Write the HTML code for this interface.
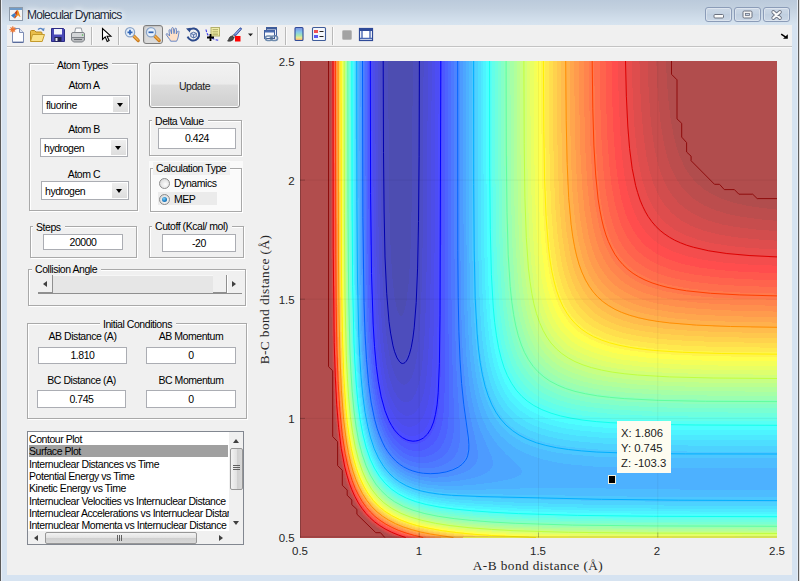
<!DOCTYPE html>
<html><head><meta charset="utf-8"><title>Molecular Dynamics</title>
<style>
html,body{margin:0;padding:0}
body{width:800px;height:581px;overflow:hidden;position:relative;background:#d6e3f1;font-family:"Liberation Sans",sans-serif;font-size:10.5px;letter-spacing:-0.45px;color:#000}
div,span{position:absolute;box-sizing:border-box}
.t{white-space:nowrap;line-height:13px;height:13px}
.c{text-align:center}
#title{left:0;top:0;width:800px;height:25px;background:linear-gradient(#bbcadb,#c3d1e0 35%,#cfdce9 70%,#d7e4f0)}
#client{left:7px;top:25px;width:785px;height:550px;background:#f0f0f0}
.panel{border:1px solid #a9a9a9;box-shadow:1px 1px 0 #fff,inset 1px 1px 0 #fff}
.pt{background:#f0f0f0;padding:0 4px 0 3px;line-height:13px;height:13px;white-space:nowrap}
.edit{background:#fff;border:1px solid #abadb3;text-align:center;line-height:15px;white-space:nowrap}
.combo{background:#fff;border:1px solid #abadb3;line-height:18px;padding-left:3px;white-space:nowrap}
.combo i{position:absolute;right:1px;top:1px;bottom:1px;width:15px;background:linear-gradient(#efefef,#dddddd)}
.combo i:after{content:"";position:absolute;left:4px;top:6px;border:3.5px solid transparent;border-top:4px solid #000;border-bottom:0}
.li{left:1px;white-space:nowrap;line-height:12px;height:12px}
.radio{width:11px;height:11px;border-radius:50%;border:1px solid #8c8c8c;background:radial-gradient(circle at 60% 60%,#fdfdfd 0,#e4e4e4 55%,#cfcfcf 100%)}
.radio.on:after{content:"";position:absolute;left:2px;top:2px;width:5px;height:5px;border-radius:50%;background:radial-gradient(circle at 40% 35%,#7fd0f5 0,#1f7fc4 55%,#0c4f8c 100%)}
.sep{top:27px;width:1px;height:18px;background:#b9b9b9;box-shadow:1px 0 0 #fbfbfb}
.wb{top:7px;width:27px;height:15px;border:1px solid #8b9cb8;border-radius:3px;background:linear-gradient(#ccd8e6,#c4d2e2 45%,#c0cfe0 50%,#cad7e6);box-shadow:inset 0 0 0 1px rgba(255,255,255,.35)}
.wb svg{position:absolute;left:-1px;top:-1px}
.tick{letter-spacing:0;font-size:11.5px;line-height:12px;height:12px;color:#262626;white-space:nowrap}
.ax{letter-spacing:0.42px;font-family:"Liberation Serif",serif;font-size:13.3px;color:#262626;white-space:nowrap;line-height:15px}
</style></head><body>
<div id="title"></div>
<div style="left:0;top:0;width:1px;height:581px;background:#5a5a5a"></div>
<div style="left:1px;top:0;width:1px;height:581px;background:#e8eef6"></div>
<div style="left:797px;top:0;width:1px;height:581px;background:#e4ecf6"></div>
<div style="left:798px;top:0;width:1px;height:581px;background:#5f5f5f"></div>
<div style="left:799px;top:0;width:1px;height:581px;background:#e0e0e0"></div>
<div id="client"></div>
<!-- title bar -->
<svg style="position:absolute;left:9px;top:7px" width="14" height="14" viewBox="0 0 14 14">
<rect x="0.5" y="0.5" width="13" height="13" fill="#f4f4f4" stroke="#8c99a8"/>
<rect x="1" y="1" width="12" height="2" fill="#6f9bc8"/>
<path d="M2 8.5 L5.5 6 L7 7.5 L5 11 Z" fill="#3d7fc4"/>
<path d="M5.5 6 L8 3 L9 5 L7.5 9.5 L6 11.5 L5 11 L7 7.5Z" fill="#c0401c"/>
<path d="M8 3 L9.2 3.5 L11.5 10 L10.3 9.5 L9.2 8.2 L7.5 9.5 L6 11.5 L8.2 6Z" fill="#f08a1c"/>
</svg>
<div class="t" style="left:27px;top:8px;font-size:12px;line-height:15px;height:15px;letter-spacing:-0.75px;color:#222a3a;text-shadow:0 0 4px #fff,0 0 7px #fff,0 0 9px #eef3fa">Molecular Dynamics</div>
<div class="wb" style="left:705px"><svg width="27" height="15" viewBox="0 0 27 15"><rect x="9" y="7.5" width="9.5" height="3.5" rx="1" fill="#fbfbfb" stroke="#6b7280" stroke-width="1"/></svg></div>
<div class="wb" style="left:734px"><svg width="27" height="15" viewBox="0 0 27 15"><rect x="9" y="4" width="9" height="7" rx="1.2" fill="#f4f4f4" stroke="#6b7280" stroke-width="1"/><rect x="11.5" y="6.5" width="4" height="2" fill="#c4d3e6" stroke="#6b7280" stroke-width="0.8"/></svg></div>
<div class="wb" style="left:763px"><svg width="27" height="15" viewBox="0 0 27 15"><path d="M10.3 5 L16.900 11 M16.900 5 L10.300 11" stroke="#6b7280" stroke-width="3.800" stroke-linecap="round"/><path d="M10.300 5 L16.900 11 M16.900 5 L10.300 11" stroke="#fbfbfb" stroke-width="2.100" stroke-linecap="round"/></svg></div>

<!-- toolbar -->
<div style="left:7px;top:46px;width:785px;height:1px;background:#c3c3c3"></div>
<div style="left:7px;top:47px;width:785px;height:1px;background:#fafafa"></div>
<div class="sep" style="left:91px"></div><div class="sep" style="left:118px"></div><div class="sep" style="left:257px"></div><div class="sep" style="left:285px"></div><div class="sep" style="left:332px"></div>
<div style="left:143px;top:25px;width:20px;height:19px;border:1px solid #7d7d7d;border-radius:3px;background:#dadada;box-shadow:inset 1px 1px 1px #c4c4c4"></div>
<svg style="position:absolute;left:8px;top:25px" width="380" height="20" viewBox="0 0 380 20">
<!-- new -->
<g transform="translate(2,1)"><path d="M2.5 2.5h7l4 4v9.5h-11z" fill="#fdfdff" stroke="#7d8db5"/><path d="M9.5 2.5v4h4" fill="#dfe6f5" stroke="#7d8db5"/><path d="M13.5 16.5h-11" stroke="#5a6c9c"/><circle cx="2.8" cy="3.6" r="2.4" fill="#f08a3c"/><circle cx="2.8" cy="3.6" r="1.1" fill="#ffd27a"/><path d="M2.8 0v7.2M-.8 3.6h7.2M.3 1.1l5 5M5.3 1.1l-5 5" stroke="#e8642c" stroke-width=".7"/></g>
<!-- open -->
<g transform="translate(21,1)"><path d="M1.5 15V5.5q0-1 1-1h3l1.5 1.5h5q1 0 1 1V15z" fill="#e9bd4b" stroke="#b8891f"/><path d="M1.5 15.5l2-7h12l-2.3 7z" fill="#fbe28a" stroke="#c49a2c"/><path d="M9 3.6q3-2.6 5.2.2" fill="none" stroke="#5b86c4" stroke-width="1.3"/><path d="M15.6 1.8l-.6 3.4-2.8-1.4z" fill="#5b86c4"/></g>
<!-- save -->
<g transform="translate(42,1)"><path d="M1.5 2.5h12l1 1v12h-13z" fill="#4a4ab8" stroke="#2c2c86"/><rect x="4" y="3" width="8" height="5.5" fill="#f1f3fb"/><rect x="4.5" y="11" width="7" height="4.5" fill="#23234f"/><rect x="5.5" y="12" width="2" height="3" fill="#e8e8f4"/></g>
<!-- print -->
<g transform="translate(62,1)"><path d="M4.5 7l1.2-5h5.5l1.3 5z" fill="#fbfbfb" stroke="#9aa0a8"/><path d="M1.5 8q0-1.5 1.5-1.5h10q1.5 0 1.5 1.5v4.5h-13z" fill="#d4d6d8" stroke="#7f8388"/><path d="M1.5 11.5h13v2.5l-2 2h-9l-2-2z" fill="#b9bbbe" stroke="#7f8388"/><path d="M4 13.5h8" stroke="#6a6e73"/><circle cx="12.6" cy="9" r=".8" fill="#49b04a"/></g>
<!-- pointer -->
<g transform="translate(92,1)"><path d="M2.5 2.5v11l2.7-2.6 2 4.6 1.9-.9-2-4.4h3.8z" fill="#fff" stroke="#000" stroke-width="1.1" stroke-linejoin="miter"/></g>
<!-- zoom in -->
<g transform="translate(116,1)"><path d="M9.2 9.5l5 5" stroke="#c87a1e" stroke-width="3.2" stroke-linecap="round"/><path d="M9.6 9.7l4.4 4.4" stroke="#f3b04c" stroke-width="1.4" stroke-linecap="round"/><circle cx="6" cy="6.3" r="4.6" fill="#e6f0fb" stroke="#8aa4c8" stroke-width="1.3"/><path d="M3.5 6.3h5M6 3.8v5" stroke="#2f62b4" stroke-width="1.7"/></g>
<!-- zoom out -->
<g transform="translate(137,1)"><path d="M9.2 9.5l5 5" stroke="#c87a1e" stroke-width="3.2" stroke-linecap="round"/><path d="M9.6 9.7l4.4 4.4" stroke="#f3b04c" stroke-width="1.4" stroke-linecap="round"/><circle cx="6" cy="6.3" r="4.6" fill="#e6f0fb" stroke="#8aa4c8" stroke-width="1.3"/><path d="M3.5 6.3h5" stroke="#2f62b4" stroke-width="1.7"/></g>
<!-- hand -->
<g transform="translate(157,1)"><path d="M1 8.300Q1.800 7 3 8.200L4.600 10 4 4.800Q4 3.600 4.800 3.600T5.800 4.600L6.500 7.800 6.700 2.600Q6.800 1.600 7.600 1.600T8.500 2.600L9 7.600 9.800 3Q10 2.100 10.800 2.200T11.500 3.300L11.300 8 12.400 5.600Q12.900 4.800 13.600 5.100T14 6.300L13.200 11Q12.800 13 11.600 15.200H5.600Q4.800 13.200 3.600 12Z" fill="#fde0c8" stroke="#5b7fc4" stroke-width=".9" stroke-linejoin="round"/></g>
<!-- rotate -->
<g transform="translate(177,1)"><path d="M4.400 3.900A6 6 0 1 1 2.600 10.600" fill="none" stroke="#2c4a8c" stroke-width="2"/><path d="M1 2.600l4.800-.8-.9 4.600z" fill="#2c4a8c"/><path d="M5.800 7.400l2.800-1.200 2.800 1.200v3.200l-2.800 1.300-2.800-1.300z" fill="#dfe6f4" stroke="#46639e" stroke-width=".9"/><path d="M5.800 7.400l2.800 1.300 2.800-1.300M8.600 8.700v3.200" fill="none" stroke="#46639e" stroke-width=".9"/></g>
<!-- data cursor -->
<g transform="translate(197,1)"><path d="M1 3.500Q2 9.500 5.500 11.500T14 14.500" fill="none" stroke="#3a3ae8" stroke-width="1.100" stroke-dasharray="2.500 1.300"/><rect x="6" y="1.500" width="8.500" height="8.500" fill="#f1eea8" stroke="#b4b06a"/><path d="M7.500 3.500h5.500M7.500 5.300h5.500M7.500 7.100h5.500M7.500 8.600h5.500" stroke="#a09c58" stroke-width=".7"/><path d="M2 11.500h7M5.500 8v7" stroke="#000" stroke-width="1.800"/></g>
<!-- brush -->
<g transform="translate(218,1)"><path d="M7.500 9L13.800 2.200q.9-.7 1.500 0t-.1 1.400L9 10.400z" fill="#5a78c8" stroke="#2f4a98" stroke-width=".8"/><path d="M7.300 8.800l1.900 1.900-1.100 1.200-2-1.900z" fill="#c9c9c9" stroke="#666" stroke-width=".7"/><path d="M6 10q-2.500.5-3 2.500t-1.500 2.500q3.500.8 5.500-1.200 1.200-1.500.300-2.900z" fill="#4d4d4d" stroke="#2a2a2a" stroke-width=".7"/><path d="M9.300 8.300L14.300 3" stroke="#b9c8f0" stroke-width=".9"/><rect x="9" y="10" width="5.500" height="5.500" fill="#f00"/></g>
<path d="M240 8.500h5l-2.500 2.800z" fill="#222"/>
<!-- link -->
<g transform="translate(255,1)"><rect x="3.500" y="1.500" width="10" height="8" fill="#eef2fa" stroke="#3e5c9a"/><rect x="3.500" y="1.500" width="10" height="2" fill="#3e5c9a"/><rect x="1.500" y="4.500" width="10" height="8" fill="#f6f8fc" stroke="#3e5c9a"/><rect x="1.500" y="4.500" width="10" height="2" fill="#4a6cb0"/><rect x="2.500" y="10" width="6.500" height="4.500" rx="2.200" fill="none" stroke="#6f8cae" stroke-width="1.700"/><rect x="8" y="10" width="6.500" height="4.500" rx="2.200" fill="none" stroke="#6f8cae" stroke-width="1.700"/><path d="M6.500 12.300h4" stroke="#4d6a90" stroke-width="1.500"/></g>
<!-- colorbar -->
<defs><linearGradient id="cbg" x1="0" y1="0" x2="0" y2="1"><stop offset="0" stop-color="#7a8ce0"/><stop offset=".35" stop-color="#86c8ec"/><stop offset=".6" stop-color="#a4e6b4"/><stop offset=".8" stop-color="#f2e88c"/><stop offset="1" stop-color="#f0a070"/></linearGradient></defs>
<rect x="287" y="2.500" width="8" height="13" rx="1" fill="url(#cbg)" stroke="#2f4a98" stroke-width="1.100"/>
<!-- legend -->
<g transform="translate(303,1)"><rect x="1.500" y="1.500" width="13" height="13" rx="1" fill="#f4f6fb" stroke="#3e5c9a" stroke-width="1.100"/><rect x="3" y="4" width="4" height="3" fill="#f05050"/><rect x="3" y="9" width="4" height="3" fill="#5a5af0"/><path d="M8.500 5.500h4M8.500 10.500h4" stroke="#222" stroke-width="1.200"/></g>
<!-- gray square -->
<rect x="334.500" y="5.500" width="9" height="9" rx="1" fill="#a3a3a3" stroke="#b9b9b9"/>
<!-- dock -->
<g transform="translate(350,1)"><rect x="1.500" y="2.500" width="13" height="12" fill="#fff" stroke="#2f4a98" stroke-width="1.200"/><rect x="1.500" y="2.500" width="13" height="2.500" fill="#2f4a98"/><path d="M4 5v7.500M12 5v7.500M2 12.500h12" stroke="#4a68b4" stroke-width="1.400"/></g>
</svg>
<!-- toolbar overflow arrow -->
<svg style="position:absolute;left:780px;top:33px" width="9" height="7" viewBox="0 0 9 7"><path d="M1.200 1.200l4.500 3" stroke="#000" stroke-width="1.500"/><path d="M7.800 1.200v4.600h-4.800z" fill="#000"/></svg>

<!-- Atom Types panel -->
<div class="panel" style="left:29px;top:63px;width:109px;height:148px"></div>
<div class="pt" style="left:54px;top:59px">Atom Types</div>
<div class="t c" style="left:42px;top:79px;width:84px">Atom A</div>
<div class="combo" style="left:42px;top:95px;width:88px;height:19px">fluorine<i></i></div>
<div class="t c" style="left:42px;top:123px;width:84px">Atom B</div>
<div class="combo" style="left:40px;top:138px;width:88px;height:19px">hydrogen<i></i></div>
<div class="t c" style="left:42px;top:168px;width:84px">Atom C</div>
<div class="combo" style="left:41px;top:181px;width:88px;height:19px">hydrogen<i></i></div>
<!-- Update button -->
<div style="left:149px;top:62px;width:91px;height:46px;border:1px solid #8a8a8a;border-radius:3px;background:linear-gradient(#f2f2f2 0,#ebebeb 48%,#dddddd 50%,#cfcfcf 100%);box-shadow:inset 0 0 0 1px #fcfcfc;text-align:center;line-height:47px;color:#1c1c1c">Update</div>
<!-- Delta Value -->
<div class="panel" style="left:149px;top:120px;width:93px;height:36px"></div>
<div class="pt" style="left:152px;top:115px">Delta Value</div>
<div class="edit" style="left:158px;top:128px;width:78px;height:21px;line-height:19px">0.424</div>
<!-- Calculation Type -->
<div style="left:149px;top:161px;width:94px;height:52px;background:#fafafa"></div>
<div class="panel" style="left:150px;top:168px;width:92px;height:44px"></div>
<div class="pt" style="left:153px;top:162px">Calculation Type</div>
<div style="left:158px;top:192px;width:59px;height:13px;background:#ebebeb"></div>
<div class="radio" style="left:159px;top:178px"></div>
<div class="t" style="left:174px;top:177px">Dynamics</div>
<div class="radio on" style="left:159px;top:194px"></div>
<div class="t" style="left:174px;top:193px">MEP</div>
<!-- Steps -->
<div class="panel" style="left:30px;top:226px;width:107px;height:32px"></div>
<div class="pt" style="left:33px;top:221px">Steps</div>
<div class="edit" style="left:43px;top:234px;width:80px;height:16px;line-height:14px">20000</div>
<!-- Cutoff -->
<div class="panel" style="left:149px;top:226px;width:95px;height:32px"></div>
<div class="pt" style="left:152px;top:220px">Cutoff (Kcal/ mol)</div>
<div class="edit" style="left:162px;top:234px;width:74px;height:18px;line-height:16px">-20</div>
<!-- Collision Angle -->
<div class="panel" style="left:28px;top:269px;width:218px;height:37px"></div>
<div class="pt" style="left:32px;top:263px">Collision Angle</div>
<div style="left:38px;top:275px;width:204px;height:19px;background:#e6e6e6;border-bottom:1px solid #8f8f8f;border-right:1px solid #8f8f8f;box-shadow:inset 1px 1px 0 #f6f6f6"></div>
<div style="left:38px;top:275px;width:15px;height:18px;background:#f0f0f0;border-right:1px solid #8f8f8f;border-bottom:1px solid #8f8f8f"></div>
<div style="left:43px;top:281px;border:3px solid transparent;border-right:4px solid #404040;border-left:0"></div>
<div style="left:213px;top:275px;width:14px;height:18px;background:#f0f0f0;border-right:1px solid #8f8f8f;border-bottom:1px solid #8f8f8f"></div>
<div style="left:227px;top:275px;width:15px;height:18px;background:#f0f0f0;border-left:1px solid #fff"></div>
<div style="left:232px;top:281px;border:3px solid transparent;border-left:4px solid #404040;border-right:0"></div>
<!-- Initial Conditions -->
<div class="panel" style="left:27px;top:323px;width:220px;height:96px"></div>
<div class="pt" style="left:100px;top:318px">Initial Conditions</div>
<div class="t c" style="left:38px;top:330px;width:89px">AB Distance (A)</div>
<div class="t c" style="left:146px;top:330px;width:90px">AB Momentum</div>
<div class="edit" style="left:38px;top:347px;width:89px;height:17px;line-height:15px">1.810</div>
<div class="edit" style="left:146px;top:347px;width:90px;height:17px;line-height:15px">0</div>
<div class="t c" style="left:37px;top:374px;width:89px">BC Distance (A)</div>
<div class="t c" style="left:146px;top:374px;width:90px">BC Momentum</div>
<div class="edit" style="left:37px;top:390px;width:89px;height:18px;line-height:16px">0.745</div>
<div class="edit" style="left:146px;top:390px;width:90px;height:18px;line-height:16px">0</div>
<!-- Listbox -->
<div style="left:27px;top:431px;width:217px;height:114px;background:#fff;border:1px solid #828790;overflow:hidden" id="lb">
<div style="left:1px;top:13px;width:199px;height:12px;background:#a0a0a0"></div>
<div class="li" style="top:1px">Contour Plot</div>
<div class="li" style="top:13px">Surface Plot</div>
<div class="li" style="top:26px">Internuclear Distances vs Time</div>
<div class="li" style="top:38px">Potential Energy vs Time</div>
<div class="li" style="top:50px">Kinetic Energy vs Time</div>
<div class="li" style="top:63px">Internuclear Velocities vs Internuclear Distance</div>
<div class="li" style="top:75px">Internuclear Accelerations vs Internuclear Distance</div>
<div class="li" style="top:87px">Internuclear Momenta vs Internuclear Distance</div>
<!-- v scrollbar -->
<div style="left:201px;top:0;width:15px;height:99px;background:#f0f0f0"></div>
<div style="left:205px;top:7px;border:3px solid transparent;border-bottom:4px solid #404040;border-top:0"></div>
<div style="left:205px;top:89px;border:3px solid transparent;border-top:4px solid #404040;border-bottom:0"></div>
<div style="left:202px;top:16px;width:13px;height:42px;border:1px solid #979797;border-radius:2px;background:linear-gradient(90deg,#f3f3f3,#e2e2e2 50%,#cfcfcf 51%,#d8d8d8)"></div>
<div style="left:205px;top:33px;width:7px;height:1px;background:#606060;box-shadow:0 2px 0 #606060,0 4px 0 #606060"></div>
<!-- h scrollbar -->
<div style="left:0;top:99px;width:216px;height:14px;background:#f0f0f0"></div>
<div style="left:6px;top:103px;border:3px solid transparent;border-right:4px solid #404040;border-left:0"></div>
<div style="left:191px;top:103px;border:3px solid transparent;border-left:4px solid #404040;border-right:0"></div>
<div style="left:17px;top:100px;width:152px;height:12px;border:1px solid #979797;border-radius:2px;background:linear-gradient(#f3f3f3,#e2e2e2 50%,#cfcfcf 51%,#d8d8d8)"></div>
<div style="left:89px;top:103px;width:1px;height:6px;background:#606060;box-shadow:2px 0 0 #606060,4px 0 0 #606060"></div>
</div>

<svg style="position:absolute;left:300px;top:61px" width="477" height="477" viewBox="0 0 477 477"><g shape-rendering="crispEdges"><rect width="477" height="476.5" fill="#4d4db1"/><path fill="#4d4dbc" d="M0 0l88.1 0 0.9 127.4 0.8 38.5 1.1 27.9 1.7 25.2 1.9 17.3 2.5 12.1 1.3 3.7 1.4 2.1 1.3 0.8 1.3-0.8 1.3-2.2 1.4-4.1 1.3-6.3 2.5-21.3 1.5-25.2 1-33.2 0.7-37.1 0.8-124.8 364.2 0 0 476.5-477 0 0-476.5z"/><path fill="#4d4dc7" d="M0 0l83.6 0 1 154 1 43.8 1.6 34.5 2.5 27.9 3.3 20.3 1.6 6.2 2.4 6.4 2.7 4.2 1.3 1.1 1.3 0.4 1.3-0.3 1.4-0.9 1.3-1.6 2.7-6.1 1.5-5.9 2.9-18.5 2.2-27.5 1.3-33.6 1-49.1 0.9-155.3 358.2 0 0 476.5-477 0 0-476.5z"/><path fill="#4d4dd2" d="M0 0l80.3 0 0.3 100.9 0.7 65 1.1 47.5 1.9 38.8 1.5 17.2 1.8 14.6 1.6 9.3 2.5 11.1 2.6 8.1 2.7 5.5 2.7 3.6 1.3 1.1 2.6 1.1 2.7-0.5 2.7-2.3 2.6-4.5 2.7-7.7 1.9-8.8 1.6-10.6 2.3-26.6 1.6-35.8 1-49.1 0.9-177.9 353.4 0 0 476.5-477 0 0-476.5z"/><path fill="#4d4dde" d="M0 0l77.6 0 0.3 112.8 0.8 69 1.3 50.5 2.4 39 1.7 16.7 2.3 15.1 2.6 12.3 2.7 8.7 2.6 6.4 4 6.4 4 3.5 1.3 0.6 2.7 0.4 2.7-0.7 1.3-0.9 2.6-2.7 2.7-4.6 2.7-7.4 1.8-7.9 1.8-10.6 2.4-26.5 1.6-37.2 1-51.8 0.9-191.1 349.2 0 0 476.5-477 0 0-476.5z"/><path fill="#4d4de9" d="M0 0l75.3 0 0.3 120.8 0.8 70.3 1.4 51.8 2.5 38.5 2.1 18.6 2.1 13.2 3 13.3 2.9 8.9 3.9 8.7 4 5.6 4 3.5 2.7 1.3 2.6 0.4 4-0.9 4-3 2.7-3.7 2.8-6.2 2.4-7.9 1.8-9.3 1.6-12 1.2-14.6 1.7-35.8 1-53.1 0.9-208.4 345.3 0 0 476.5-477 0 0-476.5z"/><path fill="#4d4df4" d="M0 0l73.2 0 0.3 126.1 0.9 75.6 1.5 50.5 1.2 20.3 1.6 19.5 2.4 19.2 2.6 14.5 2.7 10.5 4 11.1 3.9 7.5 2.7 3.7 2.7 2.9 2.6 2 2.7 1.5 2.6 0.8 2.7 0.2 4-0.9 4-2.6 3.9-5 2.8-5.7 2.5-7.9 1.7-8 1.5-10.6 1.3-14.6 1.5-34.5 0.9-54.4 0.9-221.7 341.7 0 0 476.5-477 0 0-476.5z"/><path fill="#4d4dff" d="M0 0l71.3 0 0.4 132.7 0.8 74.4 1.8 54.4 1.3 21.2 1.5 16.8 2.4 19.1 2.5 13.2 3 11.6 4 10.8 2.7 5.3 2.6 4.3 5.4 6.1 5.3 3.5 2.6 1.1 4 0.6 2.7-0.2 2.6-0.7 4-2.1 4-3.9 3.5-5.8 2.5-6.7 2-7.9 1.6-10.7 1.2-11.9 1.4-31.9 0.8-53.1 0.8-240.2 338.3 0 0 476.5-477 0 0-476.5z"/><path fill="#4d58ff" d="M0 0l69.6 0 0.4 135.4 0.8 77 1.9 55.7 1.5 22.6 1.6 17.2 2.6 18.4 2.7 13.1 3.9 13.7 4 9.6 5.3 8.7 2.7 3.2 4 3.6 2.6 1.8 4 1.9 2.7 0.7 4 0.5 5.3-0.8 5.3-2.6 4-3.6 3.1-4.5 2.9-6.6 2-6.9 1.5-9 1.2-12 1.1-25.2 0.6-43.8 0.7-268.1 335 0 0 476.5-477 0 0-476.5z"/><path fill="#4d63ff" d="M0 0l68 0 0.4 138 0.9 79.7 2 57.1 1.5 22.5 1.8 17.3 2.5 17 3.5 16.2 3.8 11.9 4.6 10.3 5.3 8 2.7 3 4 3.5 4 2.6 4 1.7 3.9 1 4 0.3 5.3-0.6 5.4-2.1 5.1-3.8 3.3-4 2.8-5.3 2.2-6.6 1.6-8 1.2-10.6 0.7-15.9 0.3-23.9 0.4-309.3 331.8 0 0 476.5-477 0 0-476.5z"/><path fill="#4d6eff" d="M0 0l66.6 0 0.3 143.3 1 81 0.9 33.2 1.3 25.2 1.6 22.6 2 17.2 2.8 17.3 3.2 13.8 4 11.9 2.7 6 2.9 5.5 3.7 5.3 2.7 3.1 6.6 5.6 4 2.3 4 1.6 4 1 5.3 0.5 6.6-0.8 5.3-1.8 5.4-3.4 3.9-4.2 3.1-5.3 2-5.3 1.6-7.3 0.9-8.6 0.6-21.2-0.8-107.6 0.1-230.9 328.7 0 0 476.5-477 0 0-476.5z"/><path fill="#4d79ff" d="M0 0l65.2 0 0.4 148.7 1 82.2 1 33.2 1.3 25.3 1.6 19.9 2.3 19.9 2.9 16.8 4 15.4 5 12.9 5.7 9.8 2.6 3.5 4 4.2 4 3.3 4 2.5 4 1.9 3.9 1.3 4 0.8 5.3 0.5 6.7-0.5 6.6-1.8 5.7-2.9 4.6-4 2.9-4 2.5-5.3 1.7-6.6 0.9-8 0.2-15.9-1.8-59.8-0.7-54.4-0.1-238.9 325.6 0 0 476.5-477 0 0-476.5z"/><path fill="#4d84ff" d="M0 0l63.9 0 0.4 151.3 1 83.6 1.1 34.5 1.4 25.3 1.6 19.9 2.3 19.1 3.7 19.4 4.1 14.6 5 11.9 5.9 9.5 3.9 4.8 3.2 3 4.8 3.6 4 2.3 4 1.7 5.3 1.6 5.3 0.9 5.3 0.3 8-0.6 6.6-1.7 5.4-2.3 4.8-3.2 3.7-4 3-5.3 1.5-5.3 0.8-6.6-0.1-14.6-3.7-58.4-1.3-49.1-0.5-75.7 0-180.5 322.6 0 0 476.5-477 0 0-476.5z"/><path fill="#4d8fff" d="M0 0l62.7 0 0.3 156.6 1.2 85 0.9 29.2 1.5 27.8 2.1 23.9 2.6 18.6 3.5 17.3 2.3 8.2 2.6 7.7 5.3 11.4 2.8 4.5 3.9 5.1 4 4.2 4 3.3 3.9 2.6 5.4 2.7 5.3 1.9 5.3 1.2 10.6 1 8-0.5 7.9-1.6 6.7-2.3 5.3-2.9 3.4-2.7 3.3-4.2 2.1-5.1 0.8-5.3 0.1-5.3-0.5-6.7-4.2-33.2-2.2-22.5-1.5-23.9-1-26.6-1-80.9 0-188.5 319.6 0 0 476.5-477 0 0-476.5z"/><path fill="#4d9bff" d="M0 0l61.5 0 0.4 160.6 1.1 85 1.1 31.8 1.6 26.6 2.1 22.6 2.6 18.8 4 18.3 4.2 13.3 2.9 6.6 3.5 6.6 2.7 4.2 4 5 4 4 4 3.2 5.3 3.3 5.3 2.5 5.3 1.8 6.6 1.5 6.7 0.8 6.6 0.2 9.3-0.6 8-1.2 7.9-2.1 6.4-2.7 4.3-2.7 3.8-3.9 2-4 0.7-4 0-3.9-0.7-5.4-7.1-31-3.5-20.7-2.6-23.9-1.8-29.2-1.1-35.8-0.6-47.8-0.2-197.8 316.7 0 0 476.5-477 0 0-476.5z"/><path fill="#4da6ff" d="M0 0l60.4 0 0.4 167.2 1.3 86.3 1.2 33.2 1.8 26.5 2.4 22.6 2.8 17.3 4.1 17 2.7 8 2.6 6.5 2.8 5.6 3.9 6.3 3.3 4.3 3.6 4 4.6 4 4.4 3 5.3 2.9 5.3 2.1 6.7 1.9 6.6 1.3 6.7 0.7 7.9 0.2 9.3-0.3 11-1.2 9-1.6 8.5-2.4 6.4-2.6 4.1-2.7 2.3-2.6 1.5-4-0.2-4-1.2-4-11.3-26.5-3.5-10.2-2.6-9.7-2.6-12-2-11.9-3-29.2-1.9-37.2-1-49.1-0.4-209.7 313.8 0 0 476.5-477 0 0-476.5z"/><path fill="#4db1ff" d="M0 0l59.3 0 0.4 172.5 1.4 87.5 1.3 32.2 1.8 25 2.3 21.3 3.4 19.9 4.5 17.3 5.3 13.4 3.5 6.4 3.6 5.3 4.4 5.4 4.5 4.1 5.3 3.9 5.3 3 5.3 2.4 6.7 2.1 6.6 1.5 8 1.1 15.9 0.7 13.3-0.4 15-1.2 12.9-1.6 14-2.4 7.3-1.7 6.3-2.3 2.3-1.3 1.4-1.3 0.7-1.3 0-1.4-1.1-2.6-2.2-2.7-12.8-11.8-7.9-8.6-5.3-7.1-5.4-8.9-5.1-11.4-4.2-12.4-3.3-14.1-2.6-15.9-2-17.3-1.4-19.9-1.1-23.9-0.7-27.9-0.7-74.3-0.1-151.3 310.9 0 0 476.5-477 0 0-476.5z"/><path fill="#4dbcff" d="M0 0l58.3 0 0.2 136.7 0.6 81 1.4 55.7 2.3 41.2 1.8 18.6 2.2 15.9 2.5 13.3 3.4 13.2 4.4 12 4 8.1 5.3 8.2 5.3 6 5.3 4.6 5.3 3.6 5.3 2.8 6.4 2.5 6.9 2 8 1.6 17.3 1.7 22.5 0.3 58.5-1.7 33.2-0.4 133.1 1.8 83.5 0.6 0 47.2-477 0 0-476.5zM169 0l308 0 0 406.8-102.3 0.3-46.5-0.3-34.6-1.2-26.5-2.5-12-1.9-11.9-2.7-10.7-3.4-9.3-3.9-8-4.4-7.9-5.8-6.7-6.3-4.7-5.7-4.6-6.8-4.7-9.1-3.2-8.2-3.2-10.4-2.5-10.6-2.3-13.3-1.8-14.6-1.4-15.9-1.8-35.9-1-47.8-0.4-196.4z"/><path fill="#4dc7ff" d="M0 0l57.3 0 0.2 139.4 0.6 79.6 1.4 57.1 2.3 39.8 1.9 19.9 2 14.6 2.8 14.6 3.2 12.5 4 11.2 4 8.4 5.3 8.3 5.4 6.3 5.3 4.7 5.3 3.7 6.1 3.3 6.6 2.7 7.2 2.1 8 1.7 9.3 1.3 10.6 1 22.6 0.8 155.5 2.5 150.1 1 0 40-477 0 0-476.5zM171.9 0l305.1 0 0 397.4-94.3 0.1-50.5-0.5-37.2-1.4-27.9-2.5-13.3-2-10.6-2.4-9.4-2.8-9.3-3.8-7.9-4.2-6.7-4.7-6.6-6-5.2-6.2-4.4-6.6-4.2-8-3.5-8.8-3-9.8-2.5-10.6-2.2-13.2-1.8-14.6-1.4-16-1.8-35.8-1-47.8-0.4-189.8z"/><path fill="#4dd2ff" d="M0 0l56.3 0 0.3 140.7 0.6 79.6 1.3 55.8 2.5 43.8 1.7 17.2 2.4 17.3 2.7 13.5 3.1 11.7 3.8 10.6 5 10.4 5.3 8 5.4 6 5.3 4.6 6.3 4.2 7 3.4 6.6 2.5 7.3 2.1 8.6 1.7 10.7 1.5 11.9 1 42.5 1.8 99.7 2.5 73.1 0.9 107.6 0.5 0 35.2-477 0 0-476.5zM174.7 0l302.3 0 0 390.5-90.4 0-51.8-0.6-37.2-1.4-27.9-2.5-11.9-1.8-10.7-2.2-9.3-2.6-9.3-3.5-7.9-4-6.7-4.3-6.6-5.7-5.6-6.2-5.1-7.3-3.9-7.5-3.7-9.1-2.9-9.3-2.7-11.6-2.2-12.3-1.7-13.2-1.4-16-1.8-34.5-1.1-47.8-0.4-66.3-0.1-120.8z"/><path fill="#4ddeff" d="M0 0l55.4 0 0.2 142 0.6 78.3 1.3 55.8 2.3 42.5 1.8 18.5 2.2 16.5 2.6 14.1 3.1 11.9 3.6 10.7 4.9 10.5 4.9 8 6.1 7.2 5.3 4.8 6.7 4.5 6.6 3.4 8 3.1 8 2.2 10.6 2.1 12 1.6 13.2 1.2 54.5 2.6 69.1 2 81.1 1 112.9 0.5 0 31.5-477 0 0-476.5zM177.6 0l299.4 0 0 384.6-89-0.1-50.5-0.6-37.2-1.5-27.9-2.5-13.3-2-10.6-2.3-9.3-2.7-9.3-3.6-8-4.2-6.7-4.5-6.6-6-4.7-5.5-4.6-6.8-4.1-7.8-3.7-9.3-2.8-9.3-2.5-10.6-2-12-1.7-13.2-1.5-16-1.8-34.5-1.1-47.8-0.4-65-0.1-116.8z"/><path fill="#4de9ff" d="M0 0l54.5 0 0.2 143.3 0.7 81 1.4 57.1 2.3 41.1 2 19.9 2.1 14.6 2.9 14.6 3 11.4 4 11.1 4.5 9.4 5.1 8 6.3 7.2 5.3 4.6 6.7 4.4 7.3 3.7 8.6 3.1 9.3 2.5 10.7 1.9 13.2 1.8 15 1.3 50.1 2.7 67.8 2 75.7 0.9 118.3 0.5 0 28.4-477 0 0-476.5zM180.5 0l296.5 0 0 379.2-86.4-0.1-50.5-0.7-37.2-1.5-27.9-2.5-11.9-1.8-10.6-2.2-9.3-2.6-9.4-3.5-7.9-4-6.7-4.3-6.6-5.6-5.3-6-4.2-5.9-4.4-8-3.4-8-3.4-10.6-2.5-10.6-2.2-11.9-1.7-13.3-1.5-15.9-1.9-34.6-1-46.4-0.5-65.1-0.1-114.1z"/><path fill="#4df4ff" d="M0 0l53.6 0 0.3 143.3 0.6 81 1.3 56.1 2.4 43.5 1.7 17.2 2.4 17.3 2.8 14.3 2.9 10.9 3.7 10.9 4.9 10.3 5.1 8 6 7.1 6.6 5.7 6.7 4.4 8 3.9 7.9 2.8 10 2.6 11.3 2.1 13.3 1.8 15.6 1.4 49.5 2.9 63.8 1.9 77 1 119.6 0.4 0 25.7-477 0 0-476.5zM183.4 0l293.6 0 0 374.2-83.7-0.2-50.5-0.7-37.2-1.5-27.9-2.5-12-1.9-10.6-2.2-9.3-2.6-9.3-3.5-8-4-6.6-4.4-6.6-5.6-5.4-6-4.1-5.9-4.3-8-3.5-8.4-3.3-10.2-2.5-10.6-2.1-12-3.1-27.8-1.9-34.5-1.1-46.5-0.5-63.7-0.1-111.5z"/><path fill="#4dffff" d="M0 0l52.8 0 0.2 146 0.7 79.6 1.3 57.1 2.4 42.5 1.8 18.6 2.3 15.9 2.8 14.6 3.5 12.9 3.9 10.8 4 8.3 5.4 8.3 6.4 7.5 6.1 5.3 7.4 4.7 8 3.9 9.3 3.2 10.6 2.7 10.6 1.9 14.6 1.9 17.2 1.6 46.6 2.8 62.5 1.8 75.7 0.9 120.9 0.5 0 23.2-477 0 0-476.5zM186.3 0l290.7 0 0 369.4-82.4-0.2-50.5-0.7-35.8-1.5-27.9-2.6-12-1.9-10.6-2.2-9.3-2.6-9.3-3.6-8-4-6.7-4.4-6.6-5.8-4.9-5.4-4.4-6.4-4-7.2-3.7-9-3-9.3-2.6-10.6-2.1-11.9-1.8-13.3-1.4-14.6-1.9-34.5-1.2-45.2-0.5-63.7-0.1-108.8z"/><path fill="#58fff4" d="M0 0l52 0 0.2 146 0.7 82.3 1.3 57.1 2.4 41.1 1.9 19.1 2.1 15.4 2.9 14.6 2.9 11.3 4 11.3 4.4 9.3 4.9 7.9 6.7 7.9 6.6 5.8 6.7 4.4 7.9 3.9 9.3 3.4 10.7 2.8 12.9 2.4 15 1.9 17.2 1.7 47.9 2.8 57.1 1.7 78.4 1 120.9 0.4 0 21-477 0 0-476.5zM189.2 0l287.8 0 0 364.8-81.1-0.2-50.4-0.8-35.9-1.6-27.9-2.7-12-1.9-10.6-2.4-9.3-2.8-9.3-3.7-8-4.2-6.6-4.7-5.3-4.8-5.1-5.8-4.2-6.2-4-7.4-3.7-9-2.9-9.3-2.6-10.6-2.1-11.9-1.7-13.3-1.4-14.6-1.9-33.2-1.1-45.1-0.5-62.4-0.2-106.2z"/><path fill="#63ffe9" d="M0 0l51.2 0 0.2 147.3 0.7 81 1.3 57.1 2.4 42.7 1.8 18.3 2.2 16 2.9 14.6 3.6 13.2 4.1 11.3 4.3 8.6 5.2 8 6.5 7.4 6.6 5.7 6.7 4.2 7.9 3.9 10.7 3.8 11.6 2.9 12.3 2.1 13.7 1.9 18.2 1.7 46.5 2.8 58.4 1.7 75.8 0.9 122.2 0.4 0 19-477 0 0-476.5zM192.2 0l284.8 0 0 360.4-78.4-0.3-49.2-0.8-35.8-1.5-27.9-2.7-12-1.9-10.6-2.3-9.3-2.7-9.3-3.6-8-4.1-6.6-4.5-5.4-4.6-5.6-6.2-4.6-6.6-4.3-8-3.3-8-2.9-9.3-2.6-10.6-1.9-10.6-1.8-13.3-1.5-14.6-2-33.2-1.1-45.1-0.6-61-0.1-104.9z"/><path fill="#6effde" d="M0 0l50.4 0 0.3 147.3 0.6 82.3 1.3 57.1 2.3 41.1 1.8 18.6 2.2 16 2.7 14.6 3.5 13.3 4 11.2 4.1 8.6 5.2 8.4 6.6 7.9 6.7 5.8 6.8 4.5 9.1 4.5 9.8 3.4 11.5 3 13.1 2.4 14.8 1.9 18.6 1.8 46.5 2.8 55.8 1.6 77.1 0.9 122.2 0.4 0 17.1-477 0 0-476.5zM195.1 0l281.9 0 0 356-77.1-0.3-49.1-0.8-35.9-1.6-26.6-2.7-11.9-1.9-10.7-2.3-9.3-2.7-9.3-3.7-7.9-4.1-6-4.1-6-5.1-5.3-5.9-4.3-6.2-4.4-8-3.3-8-3-9.2-2.3-9.3-2.3-12-1.8-13.3-1.5-14.6-1.9-33.1-1.2-43.8-0.6-61.1-0.2-102.2z"/><path fill="#79ffd2" d="M0 0l49.7 0 0.2 148.7 0.6 82.2 1.4 57.1 1.2 25.2 1.3 18.6 1.9 18.6 2.3 15.9 2.9 14.6 3.6 13 4 10.6 4.1 8.3 5.2 8 6.6 7.7 5.4 4.6 6.6 4.5 6.6 3.6 8 3.3 9.1 2.8 9.5 2.3 10.6 1.9 13.3 1.9 20 2 25.2 1.8 27.9 1.3 31.9 1 79.7 1.2 138.2 0.4 0 15.4-477 0 0-476.5zM198.1 0l278.9 0 0 351.7-77.1-0.3-47.8-0.9-35.9-1.7-26.5-2.7-12-2-10.6-2.5-9.3-2.9-8-3.2-8-4.2-6.6-4.6-5.3-4.8-5.4-6-3.9-5.7-4.2-7.6-3.3-7.9-3.2-9.7-2.5-10.2-2.2-12-1.8-13.3-1.4-14.6-2-33.2-1.1-43.8-0.6-59.7-0.2-98.2z"/><path fill="#84ffc7" d="M0 0l49 0 0.2 147.3 0.6 83.6 1.3 57.1 2.4 42.5 1.8 18.6 2.1 15.9 2.8 14.6 3.6 13.6 4 11.1 4 8.5 5.3 8.5 6.6 7.8 5.4 4.9 6.6 4.6 6.6 3.7 8.9 3.7 8.4 2.6 10.6 2.6 12 2.2 13.3 1.8 21.2 2.1 25.3 1.8 58.4 2.2 79.7 1.1 136.9 0.4 0 13.7-477 0 0-476.5zM201.1 0l275.9 0 0 347.5-74.4-0.4-47.8-0.8-35.9-1.8-26.6-2.8-11.9-2-10.7-2.5-9.3-2.9-7.9-3.3-8-4.3-6-4.2-6-5.3-4.6-5.3-4.6-6.6-3.6-6.7-3.5-7.9-3-9.3-2.7-10.6-2-10.6-1.9-13.3-1.4-14.6-2-31.9-1.3-43.8-0.6-59.7-0.2-96.9z"/><path fill="#8fffbc" d="M0 0l48.3 0 0.2 151.3 0.6 83.6 1.4 56.7 2.4 41.6 1.8 18.5 2.4 17 2.7 13.6 3.6 13.2 3.9 10.7 4.6 9.2 5.2 8.1 6.6 7.6 6.5 5.6 6 4 7.4 3.9 8 3.1 8 2.5 10.6 2.6 13.3 2.4 13.3 1.7 21.2 2.1 22.6 1.6 27.5 1.3 33.7 1 79.7 1 135.5 0.5 0 12.1-477 0 0-476.5zM204.2 0l272.8 0 0 343.3-73.1-0.4-46.5-0.9-34.5-1.7-26.6-2.7-12-2-10.6-2.4-9.3-2.9-8-3.1-7.9-4.2-6.6-4.4-5.4-4.8-5.3-5.8-4.7-6.7-3.6-6.6-3.5-8-3-9.3-2.5-9.5-2.2-11.7-1.9-13.3-1.5-14.6-2.1-33.2-1.2-42.5-0.6-58.4-0.2-94.2z"/><path fill="#9bffb1" d="M0 0l47.6 0 0.2 151.3 0.6 81 1.3 57.1 2.3 42.4 1.7 18.6 2.4 17.3 2.8 14.6 3.5 13.2 4 11.3 4.1 8.6 5.2 8.4 6.7 7.9 6.6 5.8 6.6 4.5 7.7 4 8.3 3.3 10.6 3.2 10.7 2.3 11.9 2.1 14.6 1.9 18.6 1.8 25.3 1.7 59.8 2.1 79.7 1.1 134.2 0.3 0 10.7-477 0 0-476.5zM207.3 0l269.7 0 0 339.1-70.4-0.4-46.5-0.9-34.6-1.7-26.5-2.8-12-2-10.6-2.5-9.3-2.9-8-3.2-7.9-4.1-5.8-4-6.1-5.3-4.8-5.3-4.6-6.6-4-7.2-3.2-7.5-3.1-9.3-2.7-10.6-2.1-10.6-1.7-12-1.6-14.6-2.1-31.8-1.2-42.5-0.7-58.4-0.2-92.9z"/><path fill="#a6ffa6" d="M0 0l46.9 0 0.2 152.6 0.6 83.7 1.4 58.4 2.4 41.1 1.9 18.6 2.4 16.7 2.8 13.8 3.6 13.3 4.2 11.3 4.3 8.6 5.2 8 6.5 7.4 6.6 5.7 6.7 4.4 7.9 4.1 9.3 3.5 9.3 2.7 12 2.7 13.3 2.1 14.6 1.8 19.9 1.8 23.9 1.6 57.2 2 79.7 1 134.2 0.4 0 9.2-477 0 0-476.5zM210.4 0l266.6 0 0 334.9-70.4-0.4-45.2-1-33.2-1.7-26.6-2.8-10.6-1.8-10.6-2.4-9.3-2.8-8.7-3.4-7.3-3.9-6.6-4.4-5.8-5-4.9-5.4-4.7-6.6-3.7-6.6-3.5-8.1-3.1-9.2-2.4-9.2-2.4-12-1.7-11.9-1.6-14.6-2.1-31.9-1.3-42.5-0.6-57-0.3-90.3z"/><path fill="#b1ff9b" d="M0 0l46.2 0 0.2 152.6 0.6 81 1.4 58.4 2.3 42.5 1.9 19.9 2.2 15.9 2.9 14.6 3.4 13.1 4 11 4.4 9.1 4.9 8 6.7 7.9 6.6 5.9 6.6 4.5 8 4.2 9.3 3.6 10.3 3.1 12 2.6 13.6 2.2 14.2 1.8 20.3 1.8 22.6 1.5 57.2 2 79.7 1 135.5 0.4 0 7.9-477 0 0-476.5zM213.6 0l263.4 0 0 330.7-67.8-0.4-45.1-1-33.3-1.7-26.5-2.9-10.7-1.8-10.6-2.5-9.3-2.8-8-3.2-7.9-4.2-6.7-4.6-5.3-4.7-5.3-5.9-4.8-7-3.6-6.6-3.4-8-2.8-8.6-2.6-10-2.1-10.6-1.9-13.3-1.4-13.2-2.1-31.9-1.3-41.1-0.6-55.8-0.3-88.9z"/><path fill="#bcff8f" d="M0 0l45.6 0 0.2 152.6 0.6 85 1.4 58.4 2.4 41.1 1.8 18.6 2.5 17.3 2.6 13.5 3.5 13 3.9 10.6 4.6 9.6 5.3 8.3 6.7 7.7 6.6 5.8 6.6 4.4 8 4.1 9.3 3.6 10.1 3 12.1 2.6 13.7 2.3 15.9 1.9 20 1.8 23.9 1.5 55.8 1.9 79.7 0.9 134.2 0.4 0 6.6-477 0 0-476.5zM216.8 0l260.2 0 0 326.5-66.4-0.4-43.9-1-33.2-1.8-26.6-2.9-10.6-1.9-10.6-2.4-9.3-3-8-3.2-8-4.3-6.1-4.3-5.8-5.2-4.8-5.4-4.5-6.5-3.7-6.8-3.4-8-3.1-9.2-2.4-9.3-2.1-10.7-1.7-11.9-1.6-14.6-2.1-30.5-1.3-41.2-0.7-55.7-0.3-86.3z"/><path fill="#c7ff84" d="M0 0l44.9 0 0.2 154 0.6 82.3 1.4 58.4 2.3 42.4 1.9 18.6 2.1 15.9 2.8 14.6 3.6 13.6 4 11.1 4.7 9.9 5.9 9.1 5.9 6.8 6.1 5.3 7.8 5.3 8.1 4.1 9.3 3.6 10.6 3.1 12 2.5 14.6 2.4 16 1.9 21.2 1.8 22.6 1.3 55.8 1.9 78.4 0.9 134.2 0.3 0 5.4-477 0 0-476.5zM220.1 0l256.9 0 0 322.3-65.1-0.5-43.9-1-33.2-1.9-25.2-2.8-10.6-1.9-10.7-2.6-9.3-3-7.9-3.3-6.7-3.6-6.6-4.5-5.3-4.7-5.3-5.8-4.6-6.6-3.7-6.7-3.4-7.9-3-8.8-2.5-9.8-2.1-10.6-3.4-25.8-2.1-31.3-1.3-39.8-0.7-54.5-0.3-84.9z"/><path fill="#d2ff79" d="M0 0l44.3 0 0.2 154 0.6 84.9 1.4 57.9 2.4 41.7 1.8 18.5 2.4 17.3 2.7 13.9 3.4 12.6 3.8 10.7 4.8 10.1 5.4 8.4 6.5 7.7 6.7 5.8 7.6 5.1 8.3 4.2 9.3 3.5 10.3 2.9 12.3 2.7 15.9 2.5 17.3 2 21.3 1.7 22.6 1.3 57.1 1.8 78.4 0.8 130.2 0.3 0 4.2-477 0 0-476.5zM223.4 0l253.6 0 0 318-63.8-0.5-42.5-1-33.2-1.9-25.3-2.9-11.9-2.2-9.3-2.3-8-2.6-8-3.3-6.6-3.5-6.7-4.5-6.1-5.3-4.8-5.3-4.7-6.6-3.7-6.7-3.2-7.3-3-8.6-2.5-9.3-2.4-11.9-3.3-25.2-2.2-30.6-1.3-39.8-0.8-54.4-0.3-82.3z"/><path fill="#deff6e" d="M0 0l43.7 0 0.2 154 0.6 84.9 1.4 58.4 2.4 42.5 2 19.9 2.3 15.9 2.9 14.6 3.2 12 3.8 10.6 5.3 10.8 5.3 8.1 6.6 7.6 6.7 5.7 7.9 5.2 8 3.9 10.4 3.8 10.9 3 13.3 2.7 15.2 2.3 16.6 1.8 21.3 1.7 22.6 1.2 55.8 1.7 77.1 0.8 131.5 0.4 0 3-477 0 0-476.5zM226.8 0l250.2 0 0 313.7-62.4-0.5-42.6-1.1-31.9-1.9-25.2-2.9-10.6-2-10.7-2.7-8-2.6-7.9-3.4-6.6-3.5-6.7-4.6-5.3-4.7-5.3-6-4.1-5.7-3.9-7-3.3-7.6-3.2-9.3-2.4-9.3-2.2-10.6-3.3-25.2-2.2-30.6-1.3-39.8-0.8-53.1-0.3-79.6z"/><path fill="#e9ff63" d="M0 0l43.1 0 0.2 154 0.6 84.9 1.3 58.4 2.5 43.8 1.7 17.3 2.4 17.4 2.9 14.4 3.5 13.3 3.9 10.6 4.4 9.3 5.2 8.3 6.7 7.8 6.6 5.9 8 5.4 9 4.5 9.6 3.5 11.1 3.1 12.8 2.7 16 2.4 17.2 1.9 34.6 2.4 46.5 1.8 81 1.1 146.2 0.4 0 1.9-477 0 0-476.5zM230.3 0l246.7 0 0 309.4-61.1-0.5-41.2-1.1-31.9-2-23.9-2.8-10.6-2-9.9-2.4-8.7-2.8-8-3.3-6.7-3.5-6.6-4.5-5.3-4.6-5.3-5.8-4.4-6-3.7-6.6-3.6-8-2.9-8.5-2.4-8.7-2.3-10.7-1.9-11.9-1.6-13.3-2.2-30.5-1.4-38.5-0.8-51.8-0.3-79.6z"/><path fill="#f4ff58" d="M0 0l42.5 0 0.2 155.3 0.6 84.9 1.4 58.4 2.4 42.5 1.9 19.9 2.3 16 2.9 14.6 3.2 11.9 3.7 10.6 5.3 11.1 5.3 8.2 6.7 7.7 6.6 5.7 8 5.3 9.3 4.5 10.6 3.8 10.7 2.9 13.3 2.6 17.2 2.5 17.3 1.8 38.5 2.6 50.5 1.6 78.4 0.9 138.2 0.3 0 0.9-477 0 0-476.5zM233.8 0l243.2 0 0 305-58.5-0.5-41.2-1.1-31.8-2-24-2.9-10.6-2.1-9.3-2.3-9.3-3-7.3-3.1-7.3-3.9-5.8-4-6.1-5.3-4.7-5.4-4.7-6.6-3.6-6.6-3.5-8-2.7-8-2.5-9.3-2.2-10.6-3.3-23.9-2.2-29.2-1.5-38.5-0.8-51.7-0.3-77z"/><path fill="#ffff4d" d="M0 0l41.9 0 0.2 150 0.5 82.3 1.2 59.7 2 41.2 1.6 18.5 1.8 16 2.5 15.9 2.8 12.5 3.3 11.4 4.1 10.6 4.5 9 5.6 8.3 5.8 6.6 6 5.3 7.9 5.3 8 4.1 9.3 3.6 10.6 3.1 11.9 2.7 16 2.6 17.3 2 18.6 1.6 43.8 2.3 58.5 1.3 86.7 0.6-372.4 0 0-476.5zM237.4 0l239.6 0 0 300.5-58.5-0.5-39.8-1.2-30.6-2-23.9-3-10.6-2-9.3-2.4-8.2-2.7-7.8-3.3-6.6-3.6-6.7-4.6-5.3-4.6-5.3-6-4.1-5.8-3.9-7-3.3-7.6-3.2-9.3-2.4-9.3-2.2-10.6-3.2-23.9-2.2-29.2-1.4-38.5-0.7-49.1-0.4-74.3z"/><path fill="#fff44d" d="M0 0l41.4 0 0.6 224.3 0.9 55.8 1.6 42.4 1.4 19.9 1.6 17.3 2 14.6 2.3 13.3 2.7 11.5 2.9 9.7 3.7 9.8 4 8 4 6.5 5.3 6.8 5.3 5.3 6.7 5.3 6.6 4.1 8 3.8 9.3 3.5 9.3 2.7 10.6 2.3 12 2.1 30.5 3.5 39.9 2.5 49 1.5-261.6 0 0-476.5zM241.1 0l235.9 0 0 296-55.8-0.6-39.9-1.2-30.5-2-23.9-3.1-10.7-2.1-9.3-2.4-7.9-2.7-7.3-3.2-7.2-3.9-5.7-4-5.1-4.5-5.3-5.9-4-5.6-4-6.9-3.4-7.7-2.8-7.9-2.6-9.3-2.2-10.6-3.4-23.9-2.3-29.2-1.4-37.2-0.8-49.1-0.4-73z"/><path fill="#ffe94d" d="M0 0l40.8 0 0.6 219 0.9 58.4 1.4 41.2 2.6 35.8 1.5 13.3 2.3 14.6 2.4 11.9 2.8 10.6 3.2 9.5 3.3 7.8 4.2 7.9 4.4 6.5 4.6 5.5 5.5 5.3 5.9 4.5 6.6 4 7.1 3.4 8.9 3.4 9.3 2.7 9.3 2.2 11.9 2.1 13.3 1.9 31.9 3 39.8 2-224.5 0 0-476.5zM244.8 0l232.2 0 0 291.4-54.5-0.6-38.5-1.2-29.2-2-24-3-10.6-2.1-9.3-2.5-8-2.7-7.9-3.4-6.7-3.7-5.3-3.7-5.7-5-4.9-5.4-4.7-6.6-3.7-6.6-3.5-8-2.7-7.8-2.6-9.4-2-9.3-3.4-23.9-2.3-29.2-1.4-35.8-0.9-49.2-0.4-70.3z"/><path fill="#ffde4d" d="M0 0l40.3 0 0.5 216.3 0.7 54.5 1.4 42.4 2.3 35.9 1.5 14.6 2 14.6 1.9 10.6 2.8 11.9 2.8 9.3 3.5 9.3 3.8 8 4 6.6 4.2 5.8 5.4 5.7 5.3 4.6 5.4 3.8 7 4 7.5 3.4 9.3 3.2 9.3 2.5 21.3 4.1 26.5 3.1 33.1 2.3-201.8 0 0-476.5zM248.7 0l228.3 0 0 286.7-53.1-0.6-38.6-1.3-29.2-2.1-22.6-3-9.3-1.9-9.3-2.4-8-2.7-7.9-3.5-6.7-3.6-5.8-4.1-6-5.3-4.7-5.3-3.8-5.3-3.8-6.7-3.6-8-2.8-7.9-2.6-9.3-2-9.3-3.5-23.9-2.3-29.2-1.5-35.8-0.8-47.8-0.4-67.7z"/><path fill="#ffd24d" d="M0 0l39.7 0 0.5 213.7 0.8 57.1 1.3 41.1 2.2 35.9 3.1 27.8 4.2 21.9 2.7 9.8 3.2 9.5 3.4 7.8 3.7 6.8 4.3 6.5 4 4.9 5.3 5.3 5.3 4.3 6.5 4.2 6.8 3.5 7.6 3.1 8.1 2.7 18.8 4.4 24.2 3.5 29.9 2.7-185.6 0 0-476.5zM252.6 0l224.4 0 0 281.9-50.5-0.6-37.2-1.3-29.2-2-22.6-3.1-9.3-1.9-9.3-2.4-8-2.7-8-3.4-6.6-3.7-5.3-3.7-5.7-4.9-4.9-5.4-4-5.4-4-6.9-3.5-7.5-2.9-8-2.6-9.3-2.1-9.3-3.5-23.9-2.3-27.8-1.6-35.9-0.8-46.4-0.5-66.4z"/><path fill="#ffc74d" d="M0 0l39.2 0 0.5 212.4 0.7 54.4 1.1 41.1 2.1 35.9 2.9 28.3 4 22.8 2.6 10.5 2.8 8.7 3.2 8 3.3 6.9 4 6.7 4 5.4 4.4 4.9 4.9 4.5 5.3 4 6.7 4 6.9 3.4 7.7 3 8 2.4 10.2 2.6 23 3.9 25.6 2.7-173.1 0 0-476.5zM256.7 0l220.3 0 0 277.1-50.5-0.8-35.9-1.3-27.9-2.1-22.6-3.1-9.3-2-9.3-2.5-7.9-2.8-6.7-2.9-6.1-3.4-5.8-4-6.1-5.3-4.8-5.3-3.8-5.3-3.9-6.8-3.6-7.8-2.9-8-2.6-9.3-2-9.3-3.4-22.6-2.3-27.8-1.5-34.5-1-45.2-0.4-65z"/><path fill="#ffbc4d" d="M0 0l38.7 0 0.4 211 0.8 57.1 1.1 39.8 1.9 34.5 2.8 27.9 3.7 22.6 2.4 10.3 2.9 9.6 2.4 6.7 3.6 7.9 3.1 5.7 4.1 6.2 4.4 5.3 4.8 4.9 5.3 4.3 6.2 4.1 7.1 3.7 6.6 2.9 8 2.7 8 2.2 19.9 4 24.7 3.1-162.9 0 0-476.5zM260.9 0l216.1 0 0 272-49.2-0.7-35.8-1.4-27.9-2.3-21.3-3.1-9.3-2-9.3-2.7-8-2.9-6.6-3.1-6.7-3.9-5.3-3.9-4.8-4.4-4.8-5.3-3.8-5.4-3.8-6.6-3-6.6-3-8-2.6-9.3-2.1-9.3-3.5-22.5-2.3-26.6-1.6-34.5-1-45.1-0.4-62.4z"/><path fill="#ffb14d" d="M0 0l38.2 0 0.4 207.1 0.7 57 1 41.2 1.9 35.8 2.7 27.9 3.8 23.9 2.1 9.3 2.7 9.3 2.3 6.6 3.4 8 3.2 6.3 4 6.3 4 5.2 4.4 4.7 4.9 4.3 5.3 3.9 5.4 3.2 6.6 3.3 6.6 2.7 9.3 2.9 18.6 4.3 22.9 3.3-154.4 0 0-476.5zM265.2 0l211.8 0 0 266.9-46.5-0.7-34.6-1.4-26.5-2.2-22.6-3.3-9.3-2-9.3-2.7-8-3-6.6-3.1-6.7-3.9-5.3-4-4.7-4.3-4.6-5.2-4-5.6-3.7-6.5-3-6.6-2.9-8-2.4-8-2.4-10.6-3.3-21.2-2.4-26.6-1.6-33.1-0.9-43.8-0.5-61.1z"/><path fill="#ffa64d" d="M0 0l37.7 0 0.4 209.7 0.6 54.4 1.2 42.5 1.8 34.5 2.6 27.9 3.5 22.7 2.4 10.5 2.6 9.3 2.7 7.9 3 7 3.2 6.3 3.4 5.6 4 5.3 4 4.5 4.8 4.5 5.2 4 5.9 3.7 5.6 2.9 6.4 2.8 8 2.7 17.2 4.4 20.9 3.4-147.1 0 0-476.5zM269.6 0l207.4 0 0 261.6-45.2-0.8-34.5-1.4-26.6-2.3-21.3-3.4-9.3-2.1-7.9-2.4-8-3-6.6-3.2-6.7-4-5.3-4-4.4-4.1-4.6-5.3-4.3-6-3.3-5.9-3-6.6-2.9-8-4.5-17.3-3.6-22.5-2.4-26.6-1.5-32.8-1-41.5-0.5-58.4z"/><path fill="#ff9b4d" d="M0 0l37.2 0 0.4 207.1 0.6 55.7 1 41.2 1.8 35.8 2.6 27.9 3.3 22.5 2.3 10.6 2.4 9.3 2.9 8.6 2.6 6.6 3 6.1 3.7 6.3 3.9 5.6 4 4.7 4.8 4.6 4.6 3.7 5.3 3.5 6.1 3.4 12.9 5.3 15.5 4.3 19.9 3.7-140.8 0 0-476.5zM274.2 0l202.8 0 0 256.2-43.8-0.9-33.3-1.5-25.2-2.2-21.3-3.4-9.3-2.2-7.9-2.4-8-3-6.2-3-5.8-3.5-5.3-3.9-5-4.6-4.7-5.3-3.8-5.3-3.8-6.6-3-6.7-2.9-7.9-4.5-17.3-3.4-21.2-2.4-25.2-1.7-33.2-1-41.2-0.5-55.7z"/><path fill="#ff8f4d" d="M0 0l36.7 0 0.4 205.7 0.6 54.5 0.9 41.1 1.6 34.5 2.5 29.2 3.4 23.9 4.4 19.7 5.3 15.4 2.7 6 3.7 6.7 6.9 9.6 4.7 5 4.6 4 5.3 3.9 5.3 3.2 6.7 3.3 6.6 2.7 14.6 4.4 18.3 3.7-135.2 0 0-476.5zM278.9 0l198.1 0 0 250.6-42.5-0.9-31.9-1.6-25.3-2.3-19.9-3.3-9.3-2.2-8-2.5-6.6-2.5-6.6-3.2-6.4-3.8-5.3-4-4.4-4-4.7-5.3-3.8-5.3-3.3-5.7-3-6.2-3.1-8-2.4-8-2.3-9.3-3.5-21.2-2.5-25.2-1.7-31.9-1-39.8-0.6-54.4z"/><path fill="#ff844d" d="M0 0l36.2 0 0.4 205.7 0.6 55.8 0.9 39.8 1.7 35.8 2.3 27.9 3.1 22.6 4.3 19.9 4.8 14.6 5.5 12 6.9 10.5 4.6 5.4 4.4 4.2 5.4 4.2 5.2 3.5 12 5.9 14.2 4.7 17.7 4-130.2 0 0-476.5zM283.8 0l193.2 0 0 244.8-41.2-1-30.5-1.5-24-2.4-19.9-3.3-9.3-2.3-8-2.5-6.6-2.7-6.7-3.2-5.3-3.3-5.3-3.9-5.3-5-4-4.5-4-5.6-3.3-5.8-3.1-6.7-2.9-7.5-4.4-16.4-3.6-21.2-2.4-23.9-1.7-30.5-1.1-39.8-0.6-51.8z"/><path fill="#ff794d" d="M0 0l35.7 0 0.4 203.1 0.6 55.7 0.9 41.2 1.5 34.5 2.3 29.2 3.2 23.9 4.3 19.9 4.6 14.6 2.8 6.6 3.3 6.7 6.8 10.2 8 8.6 5.3 4.3 5 3.4 11 5.7 13.7 4.9 16.4 4-125.8 0 0-476.5zM288.9 0l188.1 0 0 238.8-38.5-1-29.3-1.5-23.9-2.4-19.9-3.5-16-4.5-6.6-2.6-6.6-3.2-6.1-3.8-5.3-3.9-4.6-4.3-4.3-5-3.8-5.3-3.8-6.7-3.1-6.6-2.5-6.6-2.4-8.1-2.2-9.2-3.4-19.9-2.4-23.9-1.7-29.2-1.1-37.2-0.6-50.4z"/><path fill="#ff6e4d" d="M0 0l35.3 0 0.3 204.4 0.6 53.1 0.9 42.5 1.5 34.5 2.3 29.2 2.9 22.6 4.1 19.9 4.4 14.6 5.8 13.2 3 5.3 4 5.9 7.8 8.7 4.6 4 4.9 3.5 10.6 5.9 13.3 5.1 15.5 4.1-121.8 0 0-476.5zM294.2 0l182.8 0 0 232.6-37.2-1.1-29.2-1.7-22.6-2.4-18.6-3.4-8-2.1-8-2.6-7.1-3-6.2-3.1-5.4-3.5-5.2-4-4.2-4-4.6-5.3-3.7-5.3-3.4-6.1-2.8-5.8-3-8-4.3-15.9-3.4-19.9-2.5-23.8-1.6-28-1.2-35.8-0.6-47.8z"/><path fill="#ff634d" d="M0 0l34.8 0 0.4 204.4 0.5 55.8 0.9 39.8 1.5 34.5 2.1 27.9 3.1 23.8 4 20 4.5 15.1 5.3 12.4 6.7 11 4 5 3.9 4.2 4.5 4 4.9 3.6 9.7 5.7 12.8 5.2 14.5 4.1-118.1 0 0-476.5zM299.7 0l177.3 0 0 226.1-34.5-1.1-27.9-1.7-21.3-2.4-18.6-3.4-8-2-8-2.7-6.6-2.7-6-3-4.6-2.9-5.3-3.9-5.4-4.9-3.9-4.5-4-5.6-3.6-6.1-3.1-6.6-2.5-6.7-4.5-15.9-3.3-18.6-2.5-22.6-1.8-27.8-1.2-35.9-0.7-45.1z"/><path fill="#ff584d" d="M0 0l34.3 0 0.4 200.4 0.5 55.8 0.9 41.1 1.5 35.9 2.1 29.2 2.8 22.6 4 20.5 4 14 5.3 13.1 6.1 10.7 7.4 9.3 4.1 4 5 4.1 10.6 6.5 12 5.2 13.7 4.1-114.7 0 0-476.5zM305.5 0l171.5 0 0 219.3-33.2-1.1-26.6-1.8-21.3-2.6-17.2-3.3-8-2.2-7.4-2.6-6.3-2.6-6.2-3.3-5.3-3.4-5-3.9-4.3-4.2-4-4.6-3.2-4.5-3.5-5.8-3-6.2-2.6-6.6-4.6-15.9-3.5-18.6-2.6-22.6-1.8-26.5-1.2-33.2-0.7-43.8z"/><path fill="#ff4d4d" d="M0 0l33.9 0 0.4 203.1 0.5 53.1 0.8 42.4 1.5 35.9 2 26.5 2.9 23.9 3.7 19.9 4.6 16 4.8 11.9 6 10.7 7.2 9.2 3.9 4 4.7 4 9.5 6.1 11.9 5.5 13.3 4.3-111.6 0 0-476.5zM311.5 0l165.5 0 0 212.2-31.9-1.2-25.2-1.9-20-2.5-17.2-3.6-14.7-4.7-6.6-3-5.3-2.8-9.3-6.7-4.2-4-4.6-5.3-3.7-5.3-3.1-5.3-3-6.4-2.7-6.8-4.2-14.7-3.4-18.5-2.5-21.3-1.8-25.4-1.3-31.7-0.8-41.1z"/><path fill="#f44d4d" d="M0 0l33.5 0 0.3 201.7 0.5 55.8 0.8 39.8 1.4 34.5 2 28.6 2.7 23.2 4 21.2 4 14.6 5.2 13.3 5.8 10.6 7 9.3 8.5 8 9.3 6.3 10.7 5.1 13 4.5-108.7 0 0-476.5zM317.9 0l159.1 0 0 204.7-29.2-1.2-23.9-1.9-20-2.7-15.9-3.4-13.4-4.4-6-2.6-5.9-3.1-5.3-3.5-5-4-4.3-4.2-4-4.7-3.1-4.4-3.5-6-5.3-12.2-4.4-15-3.4-17.3-2.6-21.2-1.7-23.9-1.4-30.5-0.8-38.5z"/><path fill="#e94d4d" d="M0 0l33 0 0.4 200.4 0.4 54.4 0.9 41.2 1.3 34.5 2 29.2 2.7 23.9 3.6 19.9 3.8 14.6 4.9 13.3 5.5 10.5 6.6 9.4 8 8.1 9.3 6.8 10.6 5.5 13 4.8-106 0 0-476.5zM324.6 0l152.4 0 0 196.9-27.9-1.4-22.6-2-18.6-2.7-15.7-3.7-13.5-4.7-10.7-5.5-4.5-3-4.8-3.9-4.1-4.1-3.8-4.5-6.5-10.1-5.3-11.9-4.2-13.8-3.4-16.8-2.6-19.9-1.9-23.9-1.4-29.2-0.9-35.8z"/><path fill="#de4d4d" d="M0 0l32.6 0 0.3 203.1 0.5 53.1 0.8 41.1 1.4 34.5 1.9 27.9 2.7 23.9 3.6 20.5 4 15.1 4.6 12.2 5.3 10.6 6.5 9.3 7.5 8 9.4 7 10.6 5.7 11.8 4.5-103.5 0 0-476.5zM331.8 0l145.2 0 0 188.5-25.2-1.4-21.3-2-18.6-3-14.6-3.6-12-4.3-10.7-5.6-5.2-3.7-4-3.3-4-4-4-4.8-6-9.5-5.3-11.9-4.1-13.3-3.3-15.9-2.6-18.6-2-22.5-1.4-27.9-0.9-33.2z"/><path fill="#d24d4d" d="M0 0l32.2 0 0.3 199.1 1.2 95.6 1.3 34.5 1.9 29.2 2.6 23.9 3.4 19.9 3.6 14.6 4.6 13.2 5.9 12 6.3 9.3 7.1 7.8 8.6 6.8 10 5.7 12.1 4.9-101.1 0 0-476.5zM339.4 0l137.6 0 0 179.7-23.9-1.6-18.6-2-16-2.7-14.6-3.7-11.9-4.4-10.7-5.7-8.9-7-7.3-7.9-6.4-10-5-11.3-4.1-13.2-3.2-14.6-2.6-18.6-2-21.3-1.4-25.2-1-30.5z"/><path fill="#c74d4d" d="M0 0l31.7 0 0.4 199.1 1.2 95.6 1.2 33.1 1.9 30.6 2.6 23.9 3.5 20.7 3.8 15.1 4.2 12 5.3 11.2 6.6 10 7.2 7.9 8.1 6.7 10 5.9 11.2 4.7-98.9 0 0-476.5zM347.5 0l129.5 0 0 170.1-21.3-1.6-18.6-2.3-14.6-2.7-13.3-3.7-11.2-4.5-10-5.7-8-6.3-7.1-7.9-6-9.3-4.8-10.6-4-12-3.3-14.8-2.7-17-2-19.9-1.5-23.9-1.1-27.9z"/><path fill="#bc4d4d" d="M0 0l31.3 0 0.2 197.8 1.3 99.5 1.3 34.5 1.5 22.6 2.7 26.5 4 23.9 3.8 14.6 4.2 12 5.5 11.2 5.7 8.7 7 7.9 8 6.7 8.5 5.3 11.8 5.3-96.8 0 0-476.5zM356.3 0l120.7 0 0 159.9-19.9-1.9-16-2.3-13.3-2.7-11.9-3.6-10.6-4.4-9.4-5.5-7.9-6.5-6.7-7.4-5.6-8.8-5-10.6-4-12-3.1-13.2-2.6-16-2-18.5-1.6-21.3-1.1-25.2z"/><path fill="#b14d4d" d="M0 0l30.8 0 0.2 227 1.4 79.6 0.8 12.4 0.6 20.8 0.7 5.3 0.6 13.3 0.8 4.1 0.5 9.1 0.8 4 0.6 8 0.7 2.3 0.6 5.7 1 3.9 0.3 4 4.1 17.3 3.9 11.9 5.4 12 6.7 10.6 7.3 8.3 7.9 6.8 10.7 6.5 8.4 3.6-94.8 0 0-476.5zM365.8 0l111.2 0 0 148.6-15.9-1.7-14.7-2.3-13.2-3.1-10.7-3.5-9.3-4.1-8.5-5.2-7.4-6-6.7-7.4-5.3-8-5-10.4-3.7-10.6-3.2-12.9-2.7-14.9-2-16-1.6-19.9-1.3-22.6z"/></g><g fill="none" stroke-width="1" stroke-linejoin="round"><path stroke="#0000af" d="M83.2 0l0.3 91.6 0.6 58.4 0.9 46 1.7 36.3 2.3 28.3 1.6 11.5 2.4 12.7 1.6 5.9 2.4 6.2 2.7 4 1.3 1.1 1.3 0.5 1.3-0.2 1.4-0.7 1.3-1.5 1.3-2.2 1.8-4.6 1.8-6.6 1.7-9.6 1.3-10.3 2-25.2 1.4-34.5 0.9-46.5 0.6-65 0.3-95.6"/><path stroke="#0000ff" d="M70.3 0l0.3 132.7 0.9 79.7 1.7 51.7 1.3 21.3 1.8 19.9 2.1 15.6 2.8 14.9 3.8 13.9 4 10 2.7 4.9 2.6 4.1 2.7 3.2 2.7 2.6 2.6 2.1 4 2.1 2.7 0.9 3.9 0.6 2.7-0.2 2.7-0.5 2.6-1.1 2.5-1.4 4.2-4 3.3-5.3 2.7-6.7 1.9-7.6 1.6-9.6 1.1-12 1.2-29.2 0.6-47.8 0.8-254.8"/><path stroke="#0060ff" d="M62.5 0l0.4 156.6 1.1 85 1.1 32.8 1.4 24.2 2.1 23.9 2.5 18.6 3.5 17.3 2.5 9 2.4 6.9 2.9 6.8 2.6 5.2 2.7 4.3 3.8 4.9 4.2 4.5 4 3.3 3.9 2.6 5.4 2.7 3.9 1.4 5.4 1.5 5.3 0.8 6.6 0.4 8-0.4 8-1.4 6.6-2.1 5.4-2.6 3.9-2.9 3.3-3.8 1.5-2.6 0.9-2.7 1-5.3 0.1-5.3-0.5-6.6-4.6-33.2-2.2-21.3-1.6-23.9-1.1-27.8-0.7-34.5-0.4-46.5-0.1-189.8"/><path stroke="#00afff" d="M56.7 0l0.2 140.7 0.6 78.3 1.3 55.8 1 21.6 1.3 20.3 1.7 17.8 2.3 17.1 2.7 14 2.6 10.6 3.8 11.4 4.2 9.3 5.3 8.7 5.3 6.5 5.3 5 5.4 3.9 6.6 3.7 6.6 2.8 8 2.4 8 1.7 10.6 1.6 12 1.1 30.5 1.3 119.6 2.7 77.1 0.9 98.3 0.4M477 393l-91.7-0.1-51.8-0.5-37.2-1.4-14.6-1.1-13.3-1.4-12-1.8-10.6-2.3-9.3-2.6-9.3-3.6-8-4.1-6.6-4.4-6.7-5.7-5.3-6-4.4-6.3-4.3-7.9-3.8-9.3-3-9.3-2.8-12-2.1-11.9-1.7-13.3-1.4-15.9-1.9-34.5-1-47.8-0.5-66.4-0.1-123.4"/><path stroke="#10ffef" d="M51.9 0l0.2 143.3 0.6 82.3 1.3 57.1 1 21.3 1.3 19.9 1.7 18.5 2.1 16 2.7 14.6 3.3 13.2 4.1 12 4.2 8.9 5.1 8.3 5.5 6.8 6.7 6.1 6.6 4.6 8 4.2 9.5 3.6 10.4 2.8 12.8 2.5 15.1 2 17.3 1.7 21.6 1.6 25.3 1.3 59.4 1.8 75.7 0.9 123.6 0.4M477 364.3l-81.1-0.3-49.1-0.7-35.9-1.6-14.6-1.1-13.3-1.5-11.9-1.9-10.7-2.3-9.3-2.7-9.3-3.6-8-4.1-6.6-4.5-5.3-4.6-5.6-6.2-4.6-6.7-4.3-7.9-3.3-8-2.9-9.3-2.6-10.6-2.1-11.9-1.8-13.3-1.4-14.6-1.9-33.2-1.1-45.1-0.6-62.4-0.1-106.2"/><path stroke="#60ff9f" d="M47.8 0l0.2 148.7 0.6 82.2 1.3 57.1 1 22.6 1.3 19.9 1.7 18.6 2.1 15.9 2.6 14.6 3.4 13.3 4.1 11.9 4.2 9.3 5.4 8.9 5.4 6.5 6.6 6.3 6.8 4.9 9.1 4.9 9.3 3.6 12 3.4 13.3 2.7 15.9 2.3 17.3 1.8 19.9 1.6 23.9 1.3 57.2 1.8 75.7 0.8 128.9 0.4M477 340.6l-71.7-0.3-46.6-0.9-34.5-1.8-14.6-1.3-12-1.4-11.9-2.1-10.7-2.4-9.3-2.9-7.9-3.3-8-4.2-5.9-4.1-6.1-5.3-4.7-5.3-4.6-6.6-4-7.3-3.1-7.4-3.1-9.2-2.7-10.7-2-10.6-1.9-13.3-1.5-14.6-2-31.8-1.2-42.5-0.7-58.4-0.2-92.9"/><path stroke="#bfff40" d="M44.2 0l0.2 152.6 0.6 83.7 1.3 58.4 1.1 22.5 1.2 18.6 1.8 19.9 2.2 15.9 2.7 14.6 3.2 12.6 3.8 11.3 4.1 9.2 5.3 9 5.6 7.1 6.4 6.2 8 5.8 9.3 5 9.3 3.6 10.9 3.2 14.3 3.1 14.6 2.3 20 2.2 21.2 1.6 22.6 1.3 54.5 1.6 78.4 0.8 130.2 0.4M477 317.5l-63.8-0.5-43.8-1.1-31.9-1.9-13.3-1.3-12-1.6-10.6-2-10.2-2.5-8.4-2.7-8-3.3-6.6-3.6-6.6-4.5-5.4-4.6-5.3-5.8-4.2-6-3.8-6.7-3.5-7.9-3.1-8.9-2.6-9.7-2.1-10.6-1.8-12-1.6-13.2-2.1-30.6-1.4-39.8-0.7-54.4-0.3-82.3"/><path stroke="#ffef00" d="M41 0l0.5 215 0.9 57.1 1.3 41.1 2.2 34.6 1.5 14.6 1.8 12.8 2.1 12.4 2.4 10.6 2.7 9.3 3.4 9.3 4 8.6 4 6.7 5.3 7.2 5.3 5.6 6.1 5.1 7.2 4.6 8 4 8.5 3.3 8.7 2.7 12 2.7 13.3 2.4 14.6 1.9 15.9 1.6 18.6 1.3 44.6 2M477 293.2l-55.8-0.7-38.5-1.2-29.6-1.9-13-1.5-10.6-1.6-10.6-2.1-9.3-2.4-8-2.7-8-3.4-6.4-3.6-5.8-4-6-5.3-4.7-5.3-3.8-5.3-3.9-6.6-3.6-8-3-8.5-2.6-9.7-2.1-9.7-1.9-11.9-1.4-12-2.3-29.2-1.5-37.1-0.8-49.2-0.4-70.3"/><path stroke="#ff8f00" d="M38.1 0l0.4 199.1 0.5 53.1 0.9 41.1 1.5 35.9 2.2 29.2 2.9 22.7 1.9 10.5 2 9.2 2.7 9.9 2.7 7.7 3.3 7.7 3.4 6.6 4.2 6.6 5 6.3 5.4 5.3 5.3 4.2 6.4 4.1 6.9 3.6 7.4 3.1 8 2.6 9.8 2.6 9.3 1.9 23.2 3.5M477 266.3l-46.5-0.8-34-1.4-27.1-2.2-12-1.5-9.4-1.6-9.2-2-9.3-2.6-8-2.9-6.6-3-6.6-3.9-5.4-3.8-5.3-4.8-4.4-4.9-3.8-5.3-3.9-6.6-3.7-8-2.8-7.8-2.3-8.1-2.1-9.3-1.9-10.6-1.6-11.9-2.4-26.6-1.5-33.2-1-43.8-0.5-59.7"/><path stroke="#ff4000" d="M35.4 0l0.4 193.8 0.4 51.8 0.7 41.1 1.3 35.8 1.7 27.5 2.4 24.3 2.9 18.4 2 9.5 2.4 9.3 2.5 7.9 3.1 8 3.3 6.7 3.8 6.6 4.1 5.7 4 4.6 4.4 4.3 5 3.9 6.1 4 5.8 3.1 6.6 3 8 2.8 8 2.3 8.9 2.1M477 234.9l-37.2-1-29.2-1.6-24-2.5-9.4-1.5-9.2-1.8-8.4-2.2-7.5-2.4-7.1-2.9-6.2-3.1-5.7-3.5-5.2-4-5-4.8-3.9-4.5-4.1-5.8-3.4-6.2-3.1-6.6-2.5-6.6-2.4-8-1.9-8-1.8-9.2-1.7-10.7-2.4-23.9-1.8-29.2-1.1-37.1-0.6-47.8"/><path stroke="#df0000" d="M33 0l0.2 187.1 1 94.3 1.1 34.5 1.4 27.9 1.9 22.5 2.6 20.9 3.6 19 2.1 7.9 2.4 8 2.5 6.6 3 6.7 3.6 6.6 3.5 5.3 4.2 5.3 3.8 4 4.5 4.1 5.3 3.9 5.3 3.3 6.7 3.4 6.6 2.7 7.4 2.5M477 195.9l-27.9-1.4-22.3-2-18-2.7-15.5-3.6-6.7-2-6.1-2.4-5.8-2.6-5.3-3-5.3-3.6-4-3.2-4-3.8-4.3-5-3.7-5.2-2.6-4.5-2.7-5.4-2.7-6.4-2.5-7.7-1.9-6.6-3.5-17.3-2.6-19.9-1.8-22.6-1.4-29.2-0.9-35.8"/><path stroke="#8e0c0c" d="M371.5 0 371.5 13.3 377 18.8 377 57.9 381.7 62.3 381.7 76.1 386.6 81.6 386.6 91 391.1 95.2 391.1 99.7 414.5 123.3 419.5 123.3 424.3 128.6 434.4 128.6 438.9 133.2 452.7 133.2 457.2 137.6 477 137.6M28.5 0 28.5 305.7 32.7 309.8 32.7 375.6 37.6 380.7 37.6 404.6 42.3 409.3 42.3 424.2 47.2 429.1 47.2 434.2 51.8 439 51.8 443.7 56.9 448.4 56.9 453.2 75.8 471.7 80.5 471.7 84.8 476.5"/></g><g stroke="#000" stroke-opacity="0.05" stroke-width="1" fill="none"><path d="M119.2 0V476.5 M0 357.4H477"/><path d="M238.5 0V476.5 M0 238.2H477"/><path d="M357.8 0V476.5 M0 119.1H477"/></g><path d="M0.5 0V476.5 M0 476H477 M119.2 476.5v-5M0 357.4h5M238.5 476.5v-5M0 238.2h5M357.8 476.5v-5M0 119.1h5" stroke="#000" stroke-opacity="0.22" fill="none"/></svg>
<!-- tick labels -->
<div class="tick" style="left:257.700px;top:56px;width:37px;text-align:right">2.5</div>
<div class="tick" style="left:257.700px;top:175px;width:37px;text-align:right">2</div>
<div class="tick" style="left:257.700px;top:294px;width:37px;text-align:right">1.5</div>
<div class="tick" style="left:257.700px;top:413px;width:37px;text-align:right">1</div>
<div class="tick" style="left:257.700px;top:532px;width:37px;text-align:right">0.5</div>
<div class="tick c" style="left:280px;top:544.5px;width:40px">0.5</div>
<div class="tick c" style="left:399px;top:544.5px;width:40px">1</div>
<div class="tick c" style="left:518px;top:544.5px;width:40px">1.5</div>
<div class="tick c" style="left:637px;top:544.5px;width:40px">2</div>
<div class="tick c" style="left:757px;top:544.5px;width:40px">2.5</div>
<div class="ax c" id="xl" style="left:438px;top:558px;width:200px">A-B bond distance (Å)</div>
<div class="ax c" id="yl" style="left:164px;top:292px;width:200px;transform:rotate(-90deg)">B-C bond distance (Å)</div>
<!-- datatip -->
<div style="left:608px;top:475px;width:8px;height:9px;background:#000;border:1px solid #f3efd8"></div>
<div style="left:617px;top:421px;width:54px;height:52px;background:#fdfcf0;letter-spacing:0;font-size:11.3px;line-height:15px;padding:5px 0 0 4px;white-space:nowrap;color:#222">X: 1.806<br>Y: 0.745<br>Z: -103.3</div>

</body></html>
